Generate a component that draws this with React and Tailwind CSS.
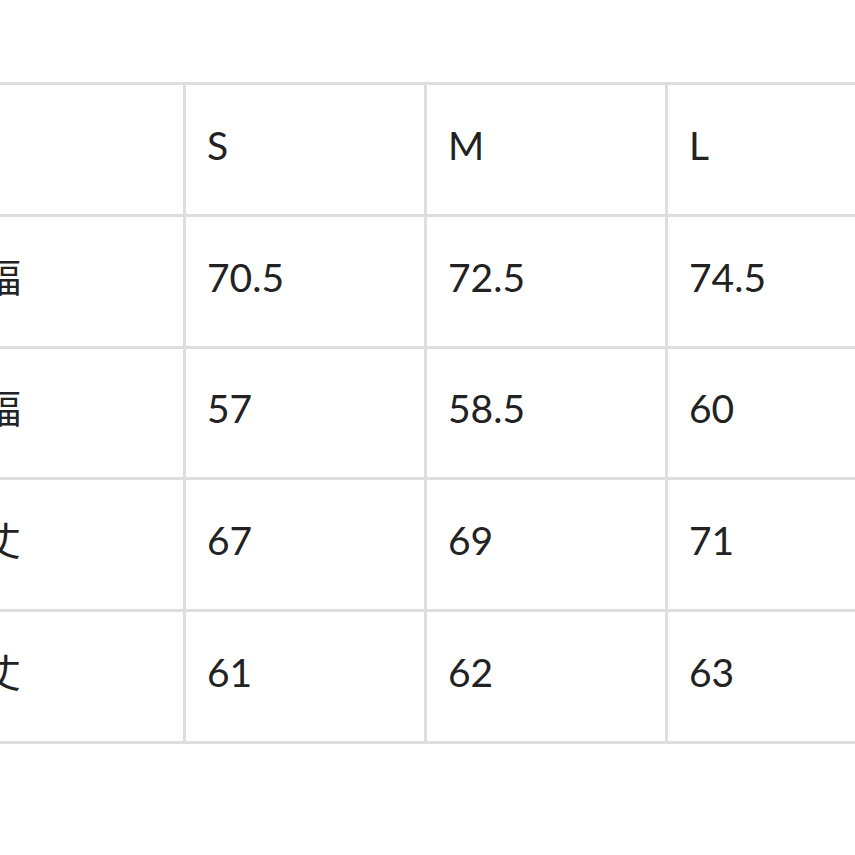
const headers = ["", "S", "M", "L"];

const rows = [
  ["身幅", "70.5", "72.5", "74.5"],
  ["肩幅", "57", "58.5", "60"],
  ["着丈", "67", "69", "71"],
  ["袖丈", "61", "62", "63"],
];

function Cell({ children }) {
  return (
    <div className="flex items-center h-[128.8px] bg-white pl-[21px] pb-[8px] text-[39px] leading-none text-[#222222] whitespace-nowrap">
      {children}
    </div>
  );
}

export default function App() {
  return (
    <div
      className="w-[855px] h-[855px] bg-white overflow-hidden"
      style={{ fontFamily: 'Lato, "Noto Sans CJK JP", sans-serif' }}
    >
      <div className="mt-[82px] ml-[-81px] w-max grid grid-cols-[261px_238px_238px_238px] gap-[3px] p-[3px] bg-[#dedede]">
        {headers.map((h, i) => (
          <Cell key={"h" + i}>{h}</Cell>
        ))}
        {rows.map((r, ri) =>
          r.map((c, ci) => <Cell key={ri + "-" + ci}>{c}</Cell>)
        )}
      </div>
    </div>
  );
}
